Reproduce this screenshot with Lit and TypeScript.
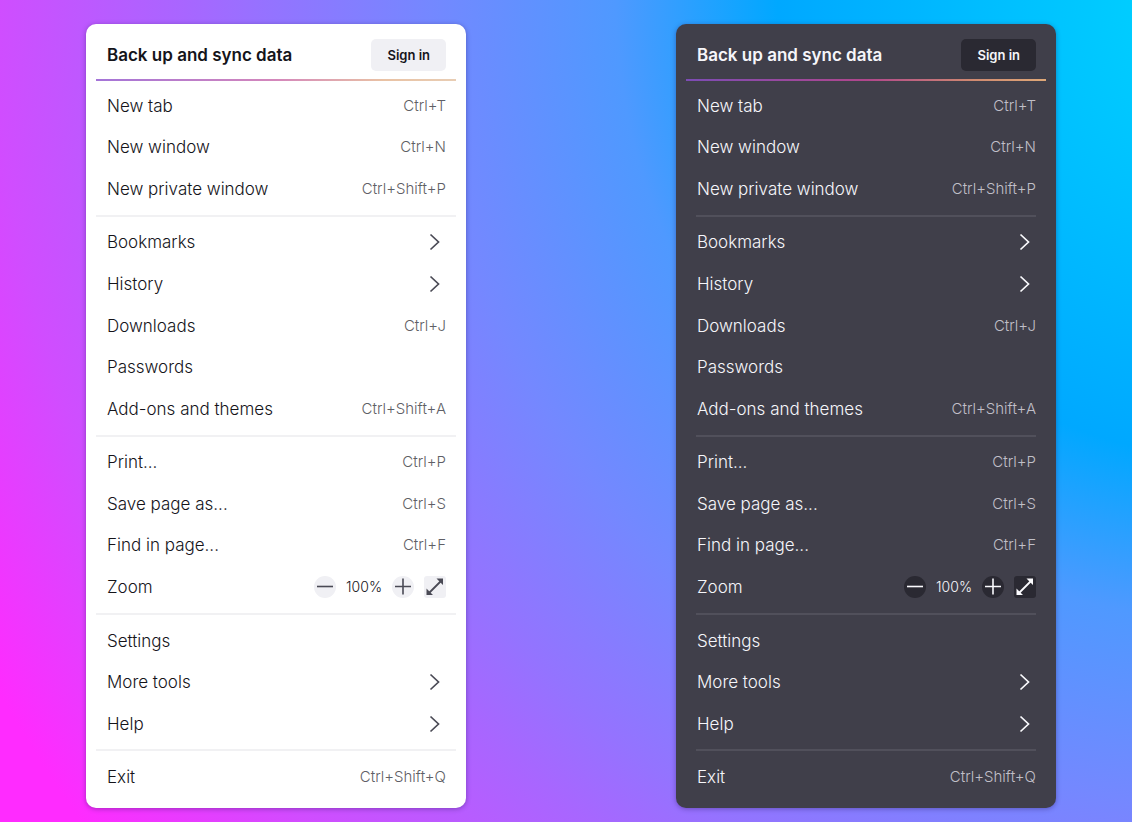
import { LitElement, html, css, svg, nothing } from "lit";
import { customElement, property, state } from "lit/decorators.js";

interface Item {
  label: string;
  keys?: string;
  submenu?: boolean;
  zoom?: boolean;
}

const GROUPS: Item[][] = [
  [
    { label: "New tab", keys: "Ctrl+T" },
    { label: "New window", keys: "Ctrl+N" },
    { label: "New private window", keys: "Ctrl+Shift+P" },
  ],
  [
    { label: "Bookmarks", submenu: true },
    { label: "History", submenu: true },
    { label: "Downloads", keys: "Ctrl+J" },
    { label: "Passwords" },
    { label: "Add-ons and themes", keys: "Ctrl+Shift+A" },
  ],
  [
    { label: "Print...", keys: "Ctrl+P" },
    { label: "Save page as...", keys: "Ctrl+S" },
    { label: "Find in page...", keys: "Ctrl+F" },
    { label: "Zoom", zoom: true },
  ],
  [
    { label: "Settings" },
    { label: "More tools", submenu: true },
    { label: "Help", submenu: true },
  ],
  [{ label: "Exit", keys: "Ctrl+Shift+Q" }],
];

const glyph = (body: unknown) => html`<svg class="glyph" viewBox="0 0 22 22" aria-hidden="true">${body}</svg>`;

@customElement("app-menu")
export class AppMenu extends LitElement {
  @property({ reflect: true }) theme: "light" | "dark" = "light";
  @state() private zoom = 100;

  static styles = css`
    :host {
      --surface: #ffffff;
      --text: #15141a;
      --muted: #5f5f66;
      --button: #f0f0f4;
      --glyph: #4a4a55;
      --rule: #f1f1f3;
      --rule-inset: 10px;
      --accent: linear-gradient(90deg, #a474d8, #d487bb 50%, #e9c2a4 80%, #e8cdb4);
      display: flex;
      flex-direction: column;
      box-sizing: border-box;
      flex: 0 1 380px;
      padding-bottom: 10px;
      border-radius: 10px;
      background: var(--surface);
      color: var(--text);
      box-shadow: 0 1px 5px rgba(40, 20, 90, 0.4);
    }
    :host([theme="dark"]) {
      --surface: #403f4a;
      --text: #f6f6fa;
      --muted: #c0bfc8;
      --button: #2a2932;
      --glyph: #fbfbfe;
      --rule: #51505b;
      --rule-inset: 20px;
      --accent: linear-gradient(90deg, #7c4cb4, #b0468c 50%, #d08a70 80%, #dfa878);
    }
    button {
      margin: 0;
      border: 0;
      font: inherit;
      color: inherit;
      background: none;
      cursor: pointer;
    }
    header {
      display: flex;
      align-items: center;
      justify-content: space-between;
      height: 55px;
      box-sizing: border-box;
      padding: 7px 20px 0 21px;
    }
    h2 {
      margin: 0;
      font-size: 17px;
      line-height: 24px;
      font-weight: 600;
    }
    .signin {
      padding: 0 16px;
      border-radius: 5px;
      background: var(--button);
      font-size: 13px;
      line-height: 32px;
      font-weight: 600;
    }
    .accent {
      height: 2px;
      margin: 0 10px 4px;
      background: var(--accent);
    }
    .rule {
      flex: none;
      height: 2px;
      margin: 5px var(--rule-inset);
      border: 0;
      background: var(--rule);
    }
    .row {
      flex: 1 1 40px;
      display: flex;
      align-items: center;
      justify-content: space-between;
      box-sizing: border-box;
      width: 100%;
      padding: 0 20px 0 21px;
      font-size: 17px;
      font-weight: 350;
      line-height: 24px;
      text-align: left;
    }
    .keys {
      font-size: 15px;
      font-weight: 300;
      color: var(--muted);
    }
    .chevron {
      width: 22px;
      height: 22px;
      color: var(--glyph);
    }
    .glyph {
      display: block;
      width: 22px;
      height: 22px;
    }
    .zoom {
      display: flex;
      align-items: center;
      gap: 10px;
    }
    .zoom output {
      font-size: 14px;
    }
    .round,
    .square {
      padding: 0;
      width: 22px;
      height: 22px;
      background: var(--button);
      color: var(--glyph);
    }
    .round {
      border-radius: 50%;
    }
    .square {
      border-radius: 3px;
    }
  `;

  private step(delta: number) {
    this.zoom = Math.min(500, Math.max(30, this.zoom + delta));
  }

  private zoomControls() {
    return html`<div class="zoom">
      <button class="round" aria-label="Zoom out" @click=${() => this.step(-10)}>
        ${glyph(svg`<path d="M3 10.5H19" fill="none" stroke="currentColor" stroke-width="1.6" />`)}
      </button>
      <output>${this.zoom}%</output>
      <button class="round" aria-label="Zoom in" @click=${() => this.step(10)}>
        ${glyph(svg`<path d="M3 10.5H19M11 2.5V18.5" fill="none" stroke="currentColor" stroke-width="1.6" />`)}
      </button>
      <button class="square" aria-label="Full screen">
        ${glyph(svg`<path d="M5 17L17 5" fill="none" stroke="currentColor" stroke-width="1.8" /><path d="M12.500 2.5H19V9ZM2.500 12.500V19H9Z" fill="currentColor" />`)}
      </button>
    </div>`;
  }

  private row(item: Item) {
    if (item.zoom) {
      return html`<div class="row"><span>${item.label}</span>${this.zoomControls()}</div>`;
    }
    return html`<button class="row">
      <span>${item.label}</span>
      ${item.keys ? html`<span class="keys">${item.keys}</span>` : nothing}
      ${item.submenu
        ? html`<span class="chevron">${glyph(svg`<path d="M6.500 3.500L14.500 11L6.500 18.500" fill="none" stroke="currentColor" stroke-width="1.7" />`)}</span>`
        : nothing}
    </button>`;
  }

  render() {
    return html`
      <header>
        <h2>Back up and sync data</h2>
        <button class="signin">Sign in</button>
      </header>
      <div class="accent"></div>
      ${GROUPS.map(
        (group, i) => html`${i ? html`<hr class="rule" />` : nothing}${group.map((item) => this.row(item))}`
      )}
    `;
  }
}

@customElement("app-root")
export class AppRoot extends LitElement {
  static styles = css`
    :host {
      display: flex;
      justify-content: space-between;
      gap: 24px;
      box-sizing: border-box;
      min-height: 100vh;
      padding: 24px 76px 14px 86px;
      font-family: Inter, "Liberation Sans", sans-serif;
      background: radial-gradient(
        circle at 110% -1%,
        #00d0ff 80px,
        #00a8ff 468px,
        #4f99ff 630px,
        #7488ff 815px,
        #9473ff 975px,
        #a866ff 1060px,
        #d04dff 1250px,
        #ff2bff 1430px
      );
    }
  `;

  render() {
    return html`<app-menu theme="light"></app-menu><app-menu theme="dark"></app-menu>`;
  }
}
